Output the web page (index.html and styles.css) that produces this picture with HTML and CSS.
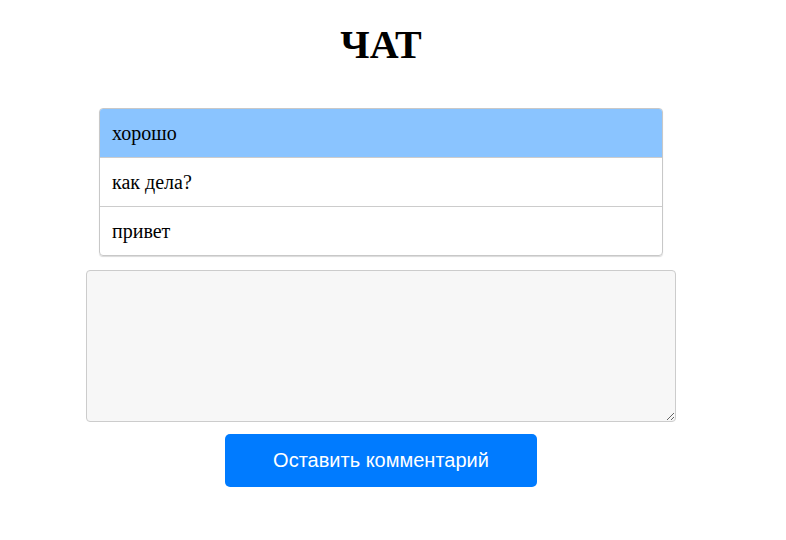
FILE: index.html
```
<!DOCTYPE html>
<html lang="ru">
<head>
<meta charset="utf-8">
<title>Чат</title>
<link rel="stylesheet" href="styles.css">
</head>
<body>
<div class="page">
  <h1 class="title">ЧАТ</h1>
  <ul class="messages">
    <li class="message active">хорошо</li>
    <li class="message">как дела?</li>
    <li class="message">привет</li>
  </ul>
  <textarea class="comment"></textarea>
  <button class="submit" type="button">Оставить комментарий</button>
</div>
</body>
</html>
```
FILE: styles.css
```
html, body {
  margin: 0;
  padding: 0;
  background: #fff;
}
.page {
  width: 762px;
  display: flex;
  flex-direction: column;
  align-items: center;
  font-family: "Liberation Serif", "Times New Roman", serif;
  color: #000;
}
.title {
  margin: 22px 0 0;
  font-size: 40px;
  line-height: 46px;
  font-weight: bold;
}
.messages {
  list-style: none;
  margin: 40px 0 0;
  padding: 0;
  width: 562px;
  border: 1px solid #c8c8c8;
  border-radius: 4px;
  box-shadow: 0 1px 1px rgba(0,0,0,0.15);
  overflow: hidden;
}
.message {
  height: 48px;
  display: flex;
  align-items: center;
  padding-left: 12px;
  font-size: 20px;
  border-top: 1px solid #cccccc;
}
.message:first-child {
  border-top: none;
}
.message.active {
  background: #8ac4ff;
}
.comment {
  display: block;
  margin-top: 14px;
  width: 590px;
  height: 152px;
  box-sizing: border-box;
  background: #f7f7f7;
  border: 1px solid #cccccc;
  border-radius: 4px;
  padding: 8px;
  resize: both;
  font-family: "Liberation Sans", Arial, sans-serif;
  font-size: 16px;
}
.submit {
  margin-top: 12px;
  width: 312px;
  height: 53px;
  background: #007bff;
  color: #fff;
  border: none;
  border-radius: 5px;
  font-family: "Liberation Sans", Arial, sans-serif;
  font-size: 20px;
  cursor: pointer;
}
```
